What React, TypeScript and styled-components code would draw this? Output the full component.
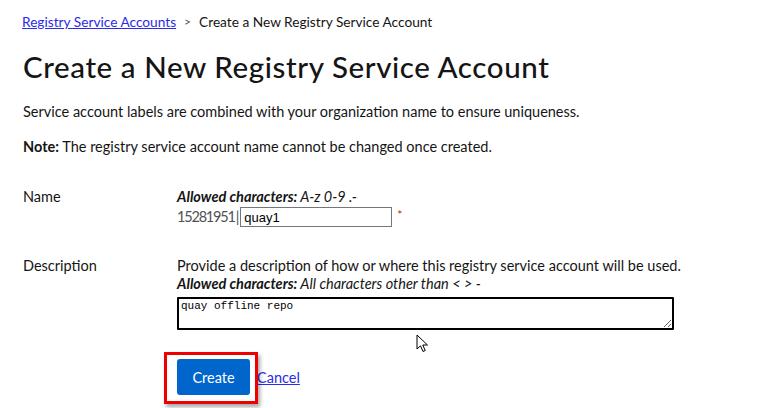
import styled, { createGlobalStyle } from "styled-components";

const GlobalStyle = createGlobalStyle`
  html, body {
    margin: 0;
    padding: 0;
    background: #fff;
  }
  body {
    font-family: Lato, "Liberation Sans", sans-serif;
    color: #151515;
  }
`;

const Page = styled.div`
  padding: 13px 23px 0 23px;
  width: 763px;
  height: 408px;
  box-sizing: border-box;
  overflow: hidden;
  position: relative;
`;

const Crumbs = styled.nav`
  display: flex;
  align-items: center;
  gap: 8px;
  font-size: 13.7px;
  line-height: 18px;
  margin-left: -1px;
`;

const Link = styled.a`
  color: #2b2be8;
  text-decoration: underline;
  cursor: pointer;
`;

const Sep = styled.span`
  font-size: 12px;
  color: #4f5255;
`;

const Title = styled.h1`
  margin: 18px 0 0;
  font-size: 29.5px;
  line-height: 36px;
  font-weight: 500;
  letter-spacing: 0.6px;
`;

const Para = styled.p<{ $top: number }>`
  margin: ${({ $top }) => $top}px 0 0;
  font-size: 14.5px;
  line-height: 18px;
`;

const Form = styled.div`
  margin-top: 32px;
  display: grid;
  grid-template-columns: 154px 1fr;
  row-gap: 30px;
`;

const Label = styled.div`
  font-size: 14.5px;
  line-height: 18px;
  color: #151515;
`;

const Field = styled.div`
  display: flex;
  flex-direction: column;
  font-size: 14.5px;
  line-height: 18px;
`;

const Help = styled.div`
  font-style: italic;
  b {
    font-weight: 700;
  }
`;

const Inline = styled.div`
  display: flex;
  align-items: center;
  margin-top: 1px;
`;

const Prefix = styled.span`
  color: #4f5255;
  letter-spacing: -1.2px;
`;

const Bar = styled.span`
  color: #4f5255;
  margin: 0 1px 0 1px;
`;

const TextInput = styled.input`
  width: 152px;
  height: 20px;
  box-sizing: border-box;
  border: 1px solid #767676;
  padding: 0 3px;
  font-family: "Liberation Sans", Arial, sans-serif;
  font-size: 13px;
  color: #000;
  outline: none;
`;

const Required = styled.span`
  color: #c9190b;
  margin-left: 5px;
  font-size: 12px;
  align-self: flex-start;
  margin-top: -1px;
`;

const TextArea = styled.textarea`
  margin-top: 4px;
  width: 497px;
  height: 33px;
  box-sizing: border-box;
  border: 2px solid #000;
  border-radius: 1px;
  padding: 1px 2px;
  font-family: "Liberation Mono", monospace;
  font-size: 11px;
  line-height: 13px;
  color: #000;
  outline: none;
  resize: both;
`;

const Actions = styled.div`
  grid-column: 2;
  margin-top: -1px;
  display: flex;
  align-items: center;
  position: relative;
`;

const PrimaryButton = styled.button`
  width: 73px;
  height: 36px;
  background: #0066cc;
  color: #fff;
  border: none;
  border-radius: 3px;
  font-family: inherit;
  font-size: 14.5px;
  cursor: pointer;
`;

const CancelLink = styled(Link)`
  font-size: 14.5px;
  margin-left: 7px;
`;

const Highlight = styled.span`
  position: absolute;
  left: -13px;
  top: -7px;
  width: 94px;
  height: 52px;
  box-sizing: border-box;
  border: 3px solid #ee0000;
  box-shadow: 2px 3px 4px rgba(0, 0, 0, 0.35);
  pointer-events: none;
`;

const Pointer = styled.svg`
  position: absolute;
  left: 416px;
  top: 334px;
`;

export default function App() {
  return (
    <>
      <GlobalStyle />
      <Page>
        <Crumbs>
          <Link>Registry Service Accounts</Link>
          <Sep>&gt;</Sep>
          <span>Create a New Registry Service Account</span>
        </Crumbs>
        <Title>Create a New Registry Service Account</Title>
        <Para $top={18}>
          Service account labels are combined with your organization name to
          ensure uniqueness.
        </Para>
        <Para $top={17}>
          <b>Note:</b> The registry service account name cannot be changed once
          created.
        </Para>
        <Form>
          <Label>Name</Label>
          <Field>
            <Help>
              <b>Allowed characters:</b> A-z 0-9 .-
            </Help>
            <Inline>
              <Prefix>15281951</Prefix>
              <Bar>|</Bar>
              <TextInput defaultValue="quay1" />
              <Required>*</Required>
            </Inline>
          </Field>
          <Label>Description</Label>
          <Field>
            <div>
              Provide a description of how or where this registry service
              account will be used.
            </div>
            <Help>
              <b>Allowed characters:</b> All characters other than &lt; &gt; -
            </Help>
            <TextArea defaultValue="quay offline repo" />
          </Field>
          <Actions>
            <Highlight />
            <PrimaryButton>Create</PrimaryButton>
            <CancelLink>Cancel</CancelLink>
          </Actions>
        </Form>
        <Pointer width="14" height="20" viewBox="0 0 14 20">
          <path
            d="M1 1 L1 15 L4.5 11.8 L7 17.5 L9.2 16.5 L6.8 11 L11.5 11 Z"
            fill="#fff"
            stroke="#000"
            strokeWidth="1"
            strokeLinejoin="round"
          />
        </Pointer>
      </Page>
    </>
  );
}
